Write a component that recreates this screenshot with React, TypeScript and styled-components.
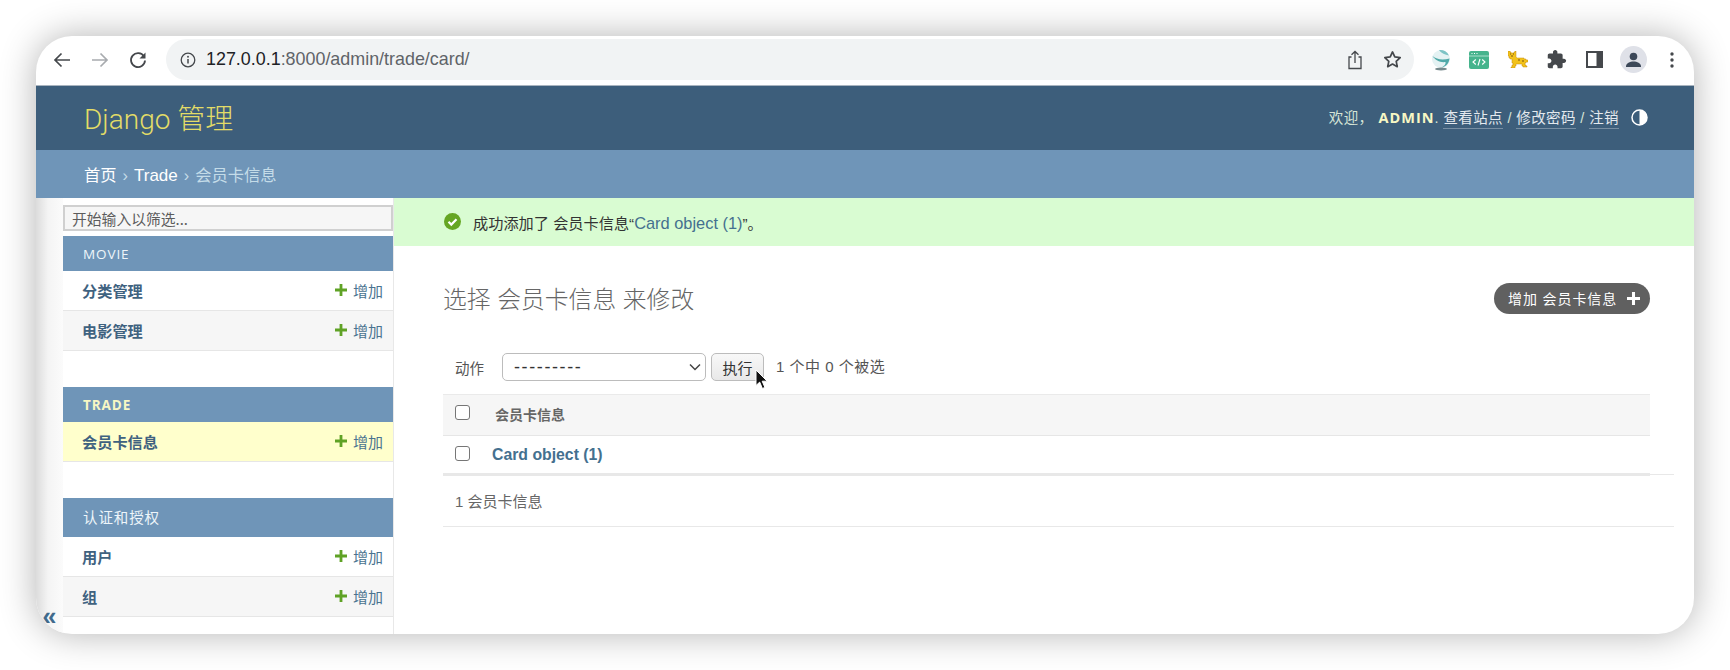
import React from 'react'
import styled, { createGlobalStyle } from 'styled-components'

const GlobalStyle = createGlobalStyle`
	html, body {
		margin: 0;
		background: #fff;
	}
	body {
		font-family: "Liberation Sans", "Noto Sans CJK SC", sans-serif;
		color: #333;
	}
	* {
		box-sizing: border-box;
	}
`

const Page = styled.div`
	width: 1730px;
	height: 670px;
	padding: 36px;
	overflow: hidden;
`

const BrowserWindow = styled.div`
	height: 598px;
	border-radius: 36px;
	background: #fff;
	box-shadow: 0 0 36px rgba(0, 0, 0, 0.3);
	overflow: hidden;
	display: flex;
	flex-direction: column;
`

const Toolbar = styled.div`
	height: 50px;
	flex: none;
	display: flex;
	align-items: center;
	padding: 0 3px 2px 7px;
	border-bottom: 1px solid #a9b4bf;
`

const ToolIcon = styled.div`
	width: ${(p: { $w?: number }) => p.$w ?? 38}px;
	height: 38px;
	flex: none;
	display: flex;
	align-items: center;
	justify-content: center;
`

const AddressBar = styled.div`
	flex: 1;
	height: 41px;
	margin: 0 8px 0 9px;
	border-radius: 21px;
	background: #f1f3f4;
	display: flex;
	align-items: center;
	padding-left: 14px;
	font-size: 17.9px;
	color: #5f6368;
`

const Host = styled.span`
	color: #202124;
	margin-left: 10px;
`

const AddressActions = styled.div`
	margin-left: auto;
	display: flex;
	margin-right: 2px;
`

const Header = styled.div`
	height: 64px;
	flex: none;
	background: #3d5e7b;
	display: flex;
	align-items: center;
	justify-content: space-between;
	padding: 0 46px 0 48px;
`

const Brand = styled.div`
	font-family: Roboto, "Noto Sans CJK SC", sans-serif;
	font-size: 28px;
	font-weight: 300;
	color: #e3dc67;
	padding-bottom: 3px;
`

const UserTools = styled.div`
	display: flex;
	align-items: baseline;
	padding-bottom: 2px;
	font-size: 14.5px;
	letter-spacing: 0.4px;
	color: #d5e4d6;
	font-weight: 400;
	white-space: pre;
`

const UserName = styled.strong`
	font-family: "Open Sans", sans-serif;
	color: #f7f7c4;
	font-weight: 700;
	letter-spacing: 1px;
	margin-left: 5px;
`

const ToolLink = styled.span`
	color: #e4e9ee;
	border-bottom: 1px solid rgba(255, 255, 255, 0.3);
	line-height: 19px;
`

const ThemeToggle = styled.span`
	display: flex;
	margin-left: 12px;
	align-self: center;
`

const Breadcrumbs = styled.div`
	height: 48px;
	flex: none;
	background: #6f95b8;
	display: flex;
	align-items: baseline;
	padding: 12px 0 0 48px;
	font-size: 16.3px;
	color: #c4dce8;
	white-space: pre;
`

const Crumb = styled.span`
	color: #fff;
`

const CrumbLatin = styled(Crumb)`
	font-size: 17px;
`

const CrumbSep = styled.span`
	margin: 0 6px;
`

const Body = styled.div`
	flex: 1;
	display: flex;
	min-height: 0;
`

const ToggleStrip = styled.div`
	width: 27px;
	flex: none;
	background: linear-gradient(90deg, #dcdcdc, #f4f4f4 45%, #fbfbfb);
	display: flex;
	align-items: flex-end;
	justify-content: center;
	padding: 0 0 5px 0;
	color: #3f6a8c;
	font-size: 25px;
	font-weight: 700;
	line-height: 26px;
`

const Sidebar = styled.nav`
	width: 331px;
	flex: none;
	border-right: 1px solid #e8e8e8;
	padding-top: 7px;
`

const FilterInput = styled.input`
	display: block;
	width: 100%;
	height: 26px;
	margin: 0 0 5px;
	padding: 0 7px;
	border: 2px solid #d0d0d0;
	background: #f6f6f6;
	font: 14.8px "Noto Sans CJK SC", sans-serif;
	outline: none;

	&::placeholder {
		color: #5c5c5c;
		opacity: 1;
	}
`

const Module = styled.div`
	margin-bottom: 36px;
`

const ModuleTitle = styled.div<{ $current?: boolean; $tall?: boolean }>`
	height: ${(p) => (p.$tall ? 39 : 35)}px;
	background: #6f95b8;
	display: flex;
	align-items: center;
	padding: 0 0 ${(p) => (p.$tall ? 2 : 0)}px 20px;
	font-family: "Open Sans", "Noto Sans CJK SC", sans-serif;
	font-size: ${(p) => (p.$tall ? 14.5 : 13.5)}px;
	font-weight: ${(p) => (p.$current ? 700 : 400)};
	letter-spacing: 0.9px;
	color: ${(p) => (p.$current ? '#f7f7c4' : '#eef5fa')};
`

const ModuleRow = styled.div<{ $alt?: boolean; $current?: boolean }>`
	height: 40px;
	display: flex;
	align-items: center;
	justify-content: space-between;
	padding: 0 10px 1px 19px;
	border-bottom: 1px solid #e6e6e6;
	background: ${(p) => (p.$current ? '#ffffcc' : p.$alt ? '#f6f6f6' : '#fff')};
`

const ModuleLink = styled.span`
	font-size: 15.2px;
	font-weight: 700;
	color: #3f6280;
`

const AddLink = styled.span`
	display: flex;
	align-items: center;
	gap: 6px;
	font-size: 15px;
	color: #4a7390;
`

const Main = styled.main`
	flex: 1;
	min-width: 0;
`

const Message = styled.div`
	height: 48px;
	background: #d9fcd2;
	display: flex;
	align-items: center;
	padding: 0 0 1px 50px;
	gap: 12px;
	font-size: 15.2px;
	color: #333;
	white-space: pre;
`

const MessageLink = styled.span`
	color: #44708f;
	font-size: 16.4px;
`

const Content = styled.div`
	padding: 37px 20px 0 49px;
`

const TitleRow = styled.div`
	height: 31px;
	margin-right: 24px;
	display: flex;
	align-items: center;
	justify-content: space-between;
`

const PageTitle = styled.h1`
	margin: 0;
	font-size: 23.8px;
	font-weight: 300;
	color: #666;
	white-space: pre;
	padding-bottom: 3px;
`

const AddButton = styled.div`
	height: 31px;
	width: 156px;
	border-radius: 16px;
	background: #606060;
	color: #fff;
	display: flex;
	align-items: center;
	justify-content: space-between;
	padding: 0 10px 1px 14px;
	font-size: 14px;
	letter-spacing: 0.9px;
	white-space: pre;
`

const Actions = styled.div`
	height: 28px;
	margin: 39px 24px 13px 12px;
	display: flex;
	align-items: center;
	font-size: 14.5px;
	color: #555;
	position: relative;
`

const ActionSelect = styled.select`
	appearance: none;
	width: 204px;
	height: 28px;
	margin-left: 18px;
	padding: 0 8px 0 11px;
	border: 1px solid #bcbcbc;
	border-radius: 5px;
	background: #fff url("data:image/svg+xml,%3Csvg xmlns='http://www.w3.org/2000/svg' width='12' height='8'%3E%3Cpath d='M1 1.500l5 5 5-5' fill='none' stroke='%23444' stroke-width='1.500'/%3E%3C/svg%3E") no-repeat right 4px center;
	color: #333;
	font: 18px "Liberation Sans", sans-serif;
	letter-spacing: 1.6px;
`

const GoButton = styled.div`
	width: 53px;
	height: 28px;
	margin: 0 12px 0 5px;
	border: 1px solid #bcbcbc;
	border-radius: 5px;
	background: linear-gradient(#f8f8f8, #e8e8e8);
	color: #333;
	font-size: 15px;
	display: flex;
	align-items: center;
	justify-content: center;
`

const SelectedCount = styled.span`
	font-size: 15px;
	letter-spacing: 0.5px;
	white-space: pre;
	margin-bottom: 3px;
`

const Pointer = styled.svg`
	position: absolute;
	left: 300px;
	top: 16px;
`

const ResultTable = styled.div`
	margin-right: 24px;
`

const HeadRow = styled.div`
	height: 42px;
	display: flex;
	align-items: center;
	padding: 0 0 3px 12px;
	background: #f6f6f6;
	border-top: 1px solid #eaeaea;
	border-bottom: 1px solid #e6e6e6;
	font-size: 14px;
	font-weight: 700;
	color: #666;
	gap: 25px;
`

const BodyRow = styled.div`
	height: 40px;
	display: flex;
	align-items: center;
	padding-left: 12px;
	gap: 22px;
	border-bottom: 3px solid #e8e8e8;
	font-size: 15.8px;
	font-weight: 700;
	color: #44708f;
`

const Check = styled.span`
	width: 15px;
	height: 15px;
	flex: none;
	margin-top: -3px;
	border: 1px solid #767676;
	border-radius: 3px;
	background: #fff;
`

const Paginator = styled.div`
	height: 53px;
	margin-top: -2px;
	border-top: 1px solid #e8e8e8;
	border-bottom: 1px solid #e8e8e8;
	display: flex;
	align-items: center;
	padding-left: 12px;
	font-size: 15px;
	color: #666;
	white-space: pre;
`

const Plus = ({ color = '#5fa225', size = 12 }: { color?: string; size?: number }) => (
	<svg width={size} height={size} viewBox="0 0 12 12">
		<path d="M4.6 0h2.8v4.6H12v2.8H7.4V12H4.6V7.4H0V4.6h4.6z" fill={color} />
	</svg>
)

const modules = [
	{ title: 'MOVIE', rows: ['分类管理', '电影管理'] },
	{ title: 'TRADE', current: true, rows: ['会员卡信息'] },
	{ title: '认证和授权', tall: true, rows: ['用户', '组'] },
]

const App = () => (
	<Page>
		<GlobalStyle />
		<BrowserWindow>
			<Toolbar>
				<ToolIcon>
					<svg width="20" height="20" viewBox="0 0 20 20" fill="none" stroke="#45484c" strokeWidth="1.7">
						<path d="M18 10H3M9.5 3.5 3 10l6.5 6.5" />
					</svg>
				</ToolIcon>
				<ToolIcon>
					<svg width="20" height="20" viewBox="0 0 20 20" fill="none" stroke="#a8abaf" strokeWidth="1.7">
						<path d="M2 10h15M10.500 3.500 17 10l-6.500 6.500" />
					</svg>
				</ToolIcon>
				<ToolIcon>
					<svg width="20" height="20" viewBox="0 0 20 20" fill="none">
						<path d="M16 6.500A7 7 0 1 0 17 10.500" stroke="#45484c" strokeWidth="1.8" />
						<path d="M17.500 2.500v6h-6z" fill="#45484c" />
					</svg>
				</ToolIcon>
				<AddressBar>
					<svg width="16" height="16" viewBox="0 0 16 16" fill="none">
						<circle cx="8" cy="8" r="6.800" stroke="#45484c" strokeWidth="1.300" />
						<path d="M8 7v4.500" stroke="#45484c" strokeWidth="1.500" />
						<circle cx="8" cy="4.800" r="0.950" fill="#45484c" />
					</svg>
					<Host>127.0.0.1</Host>
					<span>:8000/admin/trade/card/</span>
					<AddressActions>
						<ToolIcon>
							<svg width="16" height="20" viewBox="0 0 16 20" fill="none" stroke="#45484c" strokeWidth="1.300">
								<path d="M4.500 7H2v11.500h12V7h-2.500M8 13V1.500M4.500 4.800 8 1.500l3.500 3.300" />
							</svg>
						</ToolIcon>
						<ToolIcon>
							<svg width="19" height="19" viewBox="0 0 24 24" fill="none" stroke="#45484c" strokeWidth="2.200" strokeLinejoin="round">
								<path d="m12 2.500 2.900 6.300 6.800.8-5 4.700 1.300 6.800-6-3.400-6 3.400 1.300-6.800-5-4.700 6.800-.8z" />
							</svg>
						</ToolIcon>
					</AddressActions>
				</AddressBar>
				<ToolIcon $w={38.5}>
					<svg width="20" height="22" viewBox="0 0 20 22">
						<circle cx="10" cy="10" r="9" fill="#e4f2f3" />
						<path d="M1.500 7c4 3.500 10 4.500 17 2.500-.5 5-4 8.500-8 9 3-1.500 4.500-3.500 4-5.500-5 .8-10-1.500-13-6z" fill="#4fa9a8" />
						<path d="M8 1.200c4-.5 8 1.300 10 5.300-4-.8-7.500-2.500-10-5.300z" fill="#7cc3c5" />
						<ellipse cx="10" cy="20" rx="6" ry="1.400" fill="#76898c" />
					</svg>
				</ToolIcon>
				<ToolIcon $w={38.5}>
					<svg width="20" height="18" viewBox="0 0 20 18">
						<rect width="20" height="18" rx="2" fill="#46b48d" />
						<path d="M0 5h20" stroke="#d6f2e8" strokeWidth="0.700" />
						<path d="M2.500 2.500h1M5 2.500h1M7.500 2.500h1" stroke="#fff" strokeWidth="1" />
						<path d="M6.800 8.500 4 11l2.800 2.500M13.200 8.500 16 11l-2.800 2.500M11 8l-2 6.500" fill="none" stroke="#fff" strokeWidth="1.100" />
					</svg>
				</ToolIcon>
				<ToolIcon $w={38.5}>
					<svg width="20" height="17" viewBox="0 0 20 17">
						<path d="M0 0h2v1h1v1h3V1h1V0h1v6l1 1h7v1h2v1h2v2h-2v1h-1v2h1v1h1v1h-4v-1h-1v-2h-6v2H7v2H3v-1h1v-2h1v-2H4V8H2V7H1V5H0z" fill="#f2c21a" stroke="#c48d12" strokeWidth="0.500" />
						<path d="M2 3h1M5 3h1M3 5h2M10 9h2M14 10h2" stroke="#7d5410" strokeWidth="1" />
					</svg>
				</ToolIcon>
				<ToolIcon $w={38.5}>
					<svg width="21" height="21" viewBox="0 0 24 24" fill="#45484c">
						<path d="M20.500 11H19V7c0-1.100-.9-2-2-2h-4V3.500C13 2.120 11.880 1 10.500 1S8 2.120 8 3.500V5H4c-1.100 0-1.990.9-1.990 2v3.800H3.500c1.490 0 2.700 1.210 2.700 2.700s-1.210 2.700-2.700 2.700H2V20c0 1.100.9 2 2 2h3.800v-1.500c0-1.490 1.210-2.700 2.700-2.700 1.490 0 2.700 1.210 2.700 2.700V22H17c1.100 0 2-.9 2-2v-4h1.500c1.380 0 2.500-1.120 2.500-2.500S21.880 11 20.500 11z" />
					</svg>
				</ToolIcon>
				<ToolIcon $w={38.5}>
					<svg width="17" height="17" viewBox="0 0 17 17">
						<path d="M0 0h17v17H0z" fill="#45484c" />
						<path d="M2 2h8.500v13H2z" fill="#fff" />
					</svg>
				</ToolIcon>
				<ToolIcon $w={38.5}>
					<svg width="27" height="27" viewBox="0 0 27 27">
						<circle cx="13.500" cy="13.500" r="13.500" fill="#dfe1e8" />
						<circle cx="13.500" cy="10.500" r="3.800" fill="#3c4858" />
						<path d="M6 20.500c0-3.500 4-5 7.500-5s7.500 1.500 7.500 5v.5H6z" fill="#3c4858" />
					</svg>
				</ToolIcon>
				<ToolIcon $w={38.5}>
					<svg width="6" height="16" viewBox="0 0 6 16" fill="#45484c">
						<circle cx="3" cy="2" r="1.700" />
						<circle cx="3" cy="8" r="1.700" />
						<circle cx="3" cy="14" r="1.700" />
					</svg>
				</ToolIcon>
			</Toolbar>
			<Header>
				<Brand>Django 管理</Brand>
				<UserTools>
					欢迎，
					<UserName>ADMIN</UserName>
					{'. '}
					<ToolLink>查看站点</ToolLink>
					{' / '}
					<ToolLink>修改密码</ToolLink>
					{' / '}
					<ToolLink>注销</ToolLink>
					<ThemeToggle>
						<svg width="17" height="17" viewBox="0 0 17 17">
							<circle cx="8.500" cy="8.500" r="7.500" fill="none" stroke="#fff" strokeWidth="1.500" />
							<path d="M8.500 1a7.500 7.500 0 0 1 0 15z" fill="#fff" />
						</svg>
					</ThemeToggle>
				</UserTools>
			</Header>
			<Breadcrumbs>
				<Crumb>首页</Crumb>
				<CrumbSep>›</CrumbSep>
				<CrumbLatin>Trade</CrumbLatin>
				<CrumbSep>›</CrumbSep>
				会员卡信息
			</Breadcrumbs>
			<Body>
				<ToggleStrip>«</ToggleStrip>
				<Sidebar>
					<FilterInput placeholder="开始输入以筛选..." />
					{modules.map((module) => (
						<Module key={module.title}>
							<ModuleTitle $current={module.current} $tall={module.tall}>
								{module.title}
							</ModuleTitle>
							{module.rows.map((row, i) => (
								<ModuleRow key={row} $alt={i % 2 === 1} $current={module.current}>
									<ModuleLink>{row}</ModuleLink>
									<AddLink>
										<Plus />
										增加
									</AddLink>
								</ModuleRow>
							))}
						</Module>
					))}
				</Sidebar>
				<Main>
					<Message>
						<svg width="17" height="17" viewBox="0 0 17 17">
							<circle cx="8.500" cy="8.500" r="8.500" fill="#65a623" />
							<path d="m4.500 8.800 2.800 2.800 5.200-5.400" fill="none" stroke="#fff" strokeWidth="2.200" />
						</svg>
						<span>
							成功添加了 会员卡信息“<MessageLink>Card object (1)</MessageLink>”。
						</span>
					</Message>
					<Content>
						<TitleRow>
							<PageTitle>选择 会员卡信息 来修改</PageTitle>
							<AddButton>
								增加 会员卡信息
								<Plus color="#fff" size={13} />
							</AddButton>
						</TitleRow>
						<Actions>
							动作
							<ActionSelect defaultValue="">
								<option value="">---------</option>
							</ActionSelect>
							<GoButton>执行</GoButton>
							<SelectedCount>1 个中 0 个被选</SelectedCount>
							<Pointer width="13" height="21" viewBox="0 0 13 21">
								<path d="M1 1v15.500l3.700-3.400 2.700 6.400 2.500-1.100-2.700-6.200h5z" fill="#111" stroke="#fff" strokeWidth="1" />
							</Pointer>
						</Actions>
						<ResultTable>
							<HeadRow>
								<Check />
								会员卡信息
							</HeadRow>
							<BodyRow>
								<Check />
								Card object (1)
							</BodyRow>
						</ResultTable>
						<Paginator>1 会员卡信息</Paginator>
					</Content>
				</Main>
			</Body>
		</BrowserWindow>
	</Page>
)

export default App
